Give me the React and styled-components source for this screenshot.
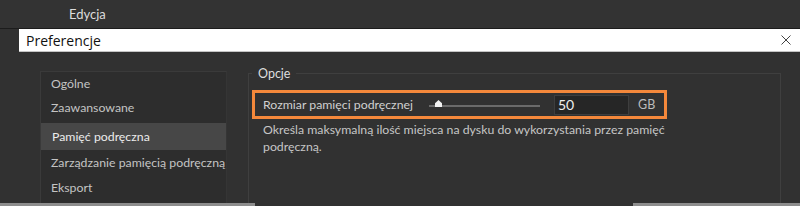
import React from "react";
import styled, { createGlobalStyle } from "styled-components";

const GlobalStyle = createGlobalStyle`
  html, body {
    margin: 0;
    padding: 0;
    background: #313131;
    font-family: "Lato", "Open Sans", sans-serif;
    overflow: hidden;
  }
`;

const sections = [
  "Ogólne",
  "Zaawansowane",
  "Pamięć podręczna",
  "Zarządzanie pamięcią podręczną",
  "Eksport",
];

export default function App() {
  return (
    <>
      <GlobalStyle />
      <StyledPage>
        <StyledMenuBar>
          <StyledMenuItem>Edycja</StyledMenuItem>
        </StyledMenuBar>
        <StyledDialog>
          <StyledTitleBar>
            <StyledTitle>Preferencje</StyledTitle>
            <StyledClose aria-label="close">
              <svg width="10" height="10" viewBox="0 0 10 10">
                <path d="M0.5 0.5 L9.5 9.5 M9.5 0.5 L0.5 9.5" stroke="#444444" strokeWidth="1" />
              </svg>
            </StyledClose>
          </StyledTitleBar>
          <StyledBody>
            <StyledSideList>
              {sections.map((name) => (
                <StyledSideItem key={name} $active={name === "Pamięć podręczna"}>
                  {name}
                </StyledSideItem>
              ))}
            </StyledSideList>
            <StyledGroup>
              <StyledLegend>Opcje</StyledLegend>
              <StyledHighlight>
                <StyledLabel>Rozmiar pamięci podręcznej</StyledLabel>
                <StyledSlider>
                  <StyledThumb style={{ left: "9px" }} />
                </StyledSlider>
                <StyledInput defaultValue="50" />
                <StyledUnit>GB</StyledUnit>
              </StyledHighlight>
              <StyledHint>
                Określa maksymalną ilość miejsca na dysku do wykorzystania przez pamięć
                <br />
                podręczną.
              </StyledHint>
            </StyledGroup>
          </StyledBody>
        </StyledDialog>
        <StyledBackEdge />
      </StyledPage>
    </>
  );
}

const StyledPage = styled.div`
  width: 800px;
  height: 206px;
  display: flex;
  flex-direction: column;
  overflow: hidden;
`;

const StyledMenuBar = styled.div`
  height: 28px;
  flex: none;
  display: flex;
  align-items: center;
  background: #333333;
  border-bottom: 1px solid #1c1c1c;
  padding-left: 69px;
`;

const StyledMenuItem = styled.span`
  font-size: 13px;
  color: #dcdcdc;
`;

const StyledDialog = styled.div`
  flex: 1;
  min-height: 0;
  margin-left: 19px;
  display: flex;
  flex-direction: column;
`;

const StyledTitleBar = styled.div`
  height: 22px;
  flex: none;
  display: flex;
  align-items: center;
  justify-content: space-between;
  background: #ffffff;
  border-bottom: 1px solid #c4c4c4;
  padding: 0 9px 0 7px;
`;

const StyledTitle = styled.span`
  font-family: "Open Sans", sans-serif;
  font-size: 14px;
  color: #111111;
`;

const StyledClose = styled.span`
  display: flex;
  align-items: center;
`;

const StyledBody = styled.div`
  flex: 1;
  min-height: 0;
  overflow: hidden;
  display: flex;
  align-items: flex-start;
  gap: 21px;
  padding: 19px 0 0 21px;
`;

const StyledSideList = styled.div`
  width: 185px;
  height: 200px;
  flex: none;
  display: flex;
  flex-direction: column;
  background: #2d2d2d;
  border: 1px solid #3a3a3a;
  border-right-color: #353535;
`;

const StyledSideItem = styled.div`
  display: flex;
  align-items: center;
  white-space: nowrap;
  padding-left: ${(p) => (p.$active ? "11px" : "10px")};
  font-size: 12.3px;
  height: ${(p) => (p.$active ? "27px" : "25px")};
  margin-top: ${(p) => (p.$active ? "3px" : "0")};
  color: ${(p) => (p.$active ? "#ececec" : "#c4c4c4")};
  background: ${(p) => (p.$active ? "#474747" : "transparent")};

  &:first-child {
    height: 23px;
  }
`;

const StyledGroup = styled.fieldset`
  width: 533px;
  height: 210px;
  margin: -5px 0 0 0;
  padding: 9px 0 0 3px;
  border: 1px solid #3f3f3f;
  box-sizing: border-box;
  flex: none;
`;

const StyledLegend = styled.legend`
  font-size: 12.5px;
  color: #dedede;
  padding: 0 6px;
  margin-left: 0;
`;

const StyledHighlight = styled.div`
  width: 415px;
  height: 29px;
  box-sizing: border-box;
  border: 3px solid #f4883b;
  display: flex;
  align-items: center;
  padding-left: 8px;
`;

const StyledLabel = styled.span`
  font-size: 12.3px;
  color: #d0d0d0;
  width: 166px;
  flex: none;
  white-space: nowrap;
`;

const StyledSlider = styled.div`
  position: relative;
  width: 111px;
  height: 2px;
  margin-top: 3px;
  background: #6a6a6a;
  flex: none;
`;

const StyledThumb = styled.span`
  position: absolute;
  top: -5px;
  width: 7px;
  height: 7px;
  margin-left: -3px;
  background: #f2f2f2;
  clip-path: polygon(50% 0, 100% 45%, 100% 100%, 0 100%, 0 45%);
`;

const StyledInput = styled.input`
  width: 75px;
  height: 20px;
  box-sizing: border-box;
  margin-left: 14px;
  background: #262626;
  border: 1px solid #3e3e3e;
  color: #efefef;
  font-family: inherit;
  font-size: 14px;
  padding: 0 0 0 3px;
  outline: none;
`;

const StyledUnit = styled.span`
  font-size: 12.5px;
  color: #bdbdbd;
  margin-left: 9px;
`;

const StyledHint = styled.p`
  margin: 2px 0 0 11px;
  font-size: 12.3px;
  line-height: 17px;
  color: #c6c6c6;
`;

const StyledBackEdge = styled.div`
  height: 3px;
  flex: none;
  background: linear-gradient(
    to right,
    #8d8d8d 0 255px,
    #313131 255px 633px,
    #8d8d8d 633px 100%
  );
`;
